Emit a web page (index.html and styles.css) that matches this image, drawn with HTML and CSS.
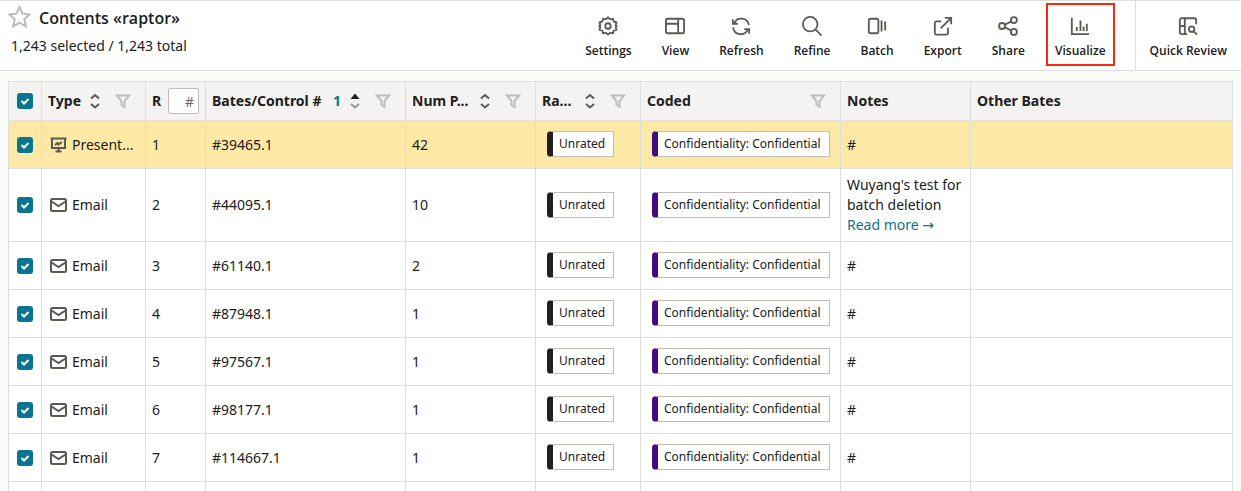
FILE: index.html
```
<!DOCTYPE html>
<html lang="en">

<head>
  <meta charset="UTF-8">
  <title>Contents «raptor»</title>
  <link rel="stylesheet" href="styles.css">
</head>

<body>
  <!-- shared icons -->
  <svg class="sprite" aria-hidden="true">
    <symbol id="sort" viewBox="0 0 12 18">
      <path d="M2 6.500l4-3.500 4 3.500M2 12l4 3.500 4-3.500" />
    </symbol>
    <symbol id="sort-up" viewBox="0 0 12 18">
      <path class="solid" d="M1.500 7l4.500-5.500 4.500 5.500z" />
      <path class="faded" d="M2 12l4 3.500 4-3.500" />
    </symbol>
    <symbol id="filter" viewBox="0 0 16 16">
      <path d="M2 2.500h12l-4.500 5.500v6l-3-2V8z" />
    </symbol>
    <symbol id="mail" viewBox="0 0 18 16">
      <rect x="1" y="2" width="15" height="12" rx="1.500" />
      <path d="M1.500 4.500l7 4.500 7-4.500" />
    </symbol>
    <symbol id="slides" viewBox="0 0 18 16">
      <path d="M.5 1.500h16M2 1.500v9.500h13V1.500M8.500 11v3.500M5.500 14.500h6M5 8l2.500-2 1 1.500L12 5" />
    </symbol>
  </svg>

  <header class="topbar">
    <div class="heading">
      <div class="title_row">
        <button class="star" type="button" aria-label="Favorite">
          <svg viewBox="0 0 22 22"><path d="M11 1.500l2.900 6.300 6.600.8-4.900 4.600 1.400 6.700-6-3.500-6 3.500 1.400-6.700-4.900-4.600 6.600-.8z" /></svg>
        </button>
        <h1>Contents «raptor»</h1>
      </div>
      <p>1,243 selected / 1,243 total</p>
    </div>

    <nav class="tools">
      <button type="button" class="tool">
        <svg viewBox="0 0 22 22"><path d="M11 1.500l2.300 2.200 3.200-.7.800 3 3 .9-.8 3.100 1 1-1 1.100.8 3.100-3 .9-.8 3-3.200-.7L11 20.500l-2.300-2.100-3.200.7-.8-3-3-.9.800-3.100-1-1.100 1-1-.8-3.100 3-.9.800-3 3.200.7z" /><circle cx="11" cy="11" r="3" /></svg>
        Settings
      </button>
      <button type="button" class="tool">
        <svg viewBox="0 0 22 22"><rect x="1" y="3" width="20" height="16" rx="2" /><path d="M1 8.500h13M14.500 3v16" /></svg>
        View
      </button>
      <button type="button" class="tool">
        <svg viewBox="0 0 22 22"><path d="M3.500 8a8.500 8.500 0 0 1 16.200 2M2.300 12.500a8.500 8.500 0 0 0 16.200 2.500M2 3.500v5h5.500M20 19.500v-5h-5.500" /></svg>
        Refresh
      </button>
      <button type="button" class="tool">
        <svg viewBox="0 0 22 22"><circle cx="9" cy="9" r="8" /><path d="M15 15l6.500 6.500" /></svg>
        Refine
      </button>
      <button type="button" class="tool">
        <svg viewBox="0 0 22 22"><rect x="2" y="3" width="10.500" height="16" rx="2" /><path d="M16 5v12M20 6v10" /></svg>
        Batch
      </button>
      <button type="button" class="tool">
        <svg viewBox="0 0 22 22"><path d="M9 6H4a2 2 0 0 0-2 2v10.500a2 2 0 0 0 2 2h10.500a2 2 0 0 0 2-2v-5.500M8.500 13.500L20 2M13 2h7v7" /></svg>
        Export
      </button>
      <button type="button" class="tool">
        <svg viewBox="0 0 22 22"><circle cx="4.500" cy="11" r="3.300" /><circle cx="17.500" cy="4.500" r="3.300" /><circle cx="17.500" cy="17.500" r="3.300" /><path d="M7.500 9.500l7-3.500M7.500 12.500l7 3.500" /></svg>
        Share
      </button>
      <button type="button" class="tool marked">
        <svg viewBox="0 0 22 22"><path d="M2 2v18h19M7.500 16.500v-4.500M11.500 16.500V5M15 16.500v-5M18.500 16.500v-8" /></svg>
        Visualize
      </button>
    </nav>

    <div class="review">
      <button type="button" class="tool">
        <svg viewBox="0 0 22 22"><path d="M10 20H4a2 2 0 0 1-2-2V4.500a2 2 0 0 1 2-2h14a2 2 0 0 1 2 2V9M7.500 2.500v17.500M2 11h5.500" /><circle cx="15" cy="14.500" r="3" /><path d="M17 16.500l4 4" /></svg>
        Quick Review
      </button>
    </div>
  </header>

  <main class="results">
    <table>
      <colgroup>
        <col class="col_check">
        <col class="col_type">
        <col class="col_row">
        <col class="col_bates">
        <col class="col_pages">
        <col class="col_rating">
        <col class="col_coded">
        <col class="col_notes">
        <col>
      </colgroup>
      <thead>
        <tr>
          <th class="check"><input type="checkbox" aria-label="Select all" checked></th>
          <th>
            <div class="head">
              <span class="name">Type</span>
              <button type="button" class="sort" aria-label="Sort by type"><svg><use href="#sort" /></svg></button>
              <button type="button" class="filter" aria-label="Filter type"><svg><use href="#filter" /></svg></button>
            </div>
          </th>
          <th>
            <div class="head row_head">
              <label for="row_number">R</label>
              <input type="text" id="row_number" placeholder="#">
            </div>
          </th>
          <th>
            <div class="head">
              <span class="name">Bates/Control #</span>
              <span class="order">1</span>
              <button type="button" class="sort" aria-label="Sort by Bates"><svg><use href="#sort-up" /></svg></button>
              <button type="button" class="filter" aria-label="Filter Bates"><svg><use href="#filter" /></svg></button>
            </div>
          </th>
          <th>
            <div class="head">
              <span class="name">Num P...</span>
              <button type="button" class="sort" aria-label="Sort by pages"><svg><use href="#sort" /></svg></button>
              <button type="button" class="filter" aria-label="Filter pages"><svg><use href="#filter" /></svg></button>
            </div>
          </th>
          <th>
            <div class="head">
              <span class="name">Ra...</span>
              <button type="button" class="sort" aria-label="Sort by rating"><svg><use href="#sort" /></svg></button>
              <button type="button" class="filter" aria-label="Filter rating"><svg><use href="#filter" /></svg></button>
            </div>
          </th>
          <th>
            <div class="head">
              <span class="name">Coded</span>
              <button type="button" class="filter" aria-label="Filter coded"><svg><use href="#filter" /></svg></button>
            </div>
          </th>
          <th>Notes</th>
          <th>Other Bates</th>
        </tr>
      </thead>
      <tbody>
        <tr class="current">
          <td class="check"><input type="checkbox" aria-label="Select row 1" checked></td>
          <td><div class="type"><svg><use href="#slides" /></svg>Present...</div></td>
          <td>1</td>
          <td>#39465.1</td>
          <td>42</td>
          <td class="tags"><span class="tag">Unrated</span></td>
          <td class="tags"><span class="tag code">Confidentiality: Confidential</span></td>
          <td>#</td>
          <td></td>
        </tr>
        <tr>
          <td class="check"><input type="checkbox" aria-label="Select row 2" checked></td>
          <td><div class="type"><svg><use href="#mail" /></svg>Email</div></td>
          <td>2</td>
          <td>#44095.1</td>
          <td>10</td>
          <td class="tags"><span class="tag">Unrated</span></td>
          <td class="tags"><span class="tag code">Confidentiality: Confidential</span></td>
          <td>Wuyang's test for batch deletion <a href="#">Read more <span class="arrow">→</span></a></td>
          <td></td>
        </tr>
        <tr>
          <td class="check"><input type="checkbox" aria-label="Select row 3" checked></td>
          <td><div class="type"><svg><use href="#mail" /></svg>Email</div></td>
          <td>3</td>
          <td>#61140.1</td>
          <td>2</td>
          <td class="tags"><span class="tag">Unrated</span></td>
          <td class="tags"><span class="tag code">Confidentiality: Confidential</span></td>
          <td>#</td>
          <td></td>
        </tr>
        <tr>
          <td class="check"><input type="checkbox" aria-label="Select row 4" checked></td>
          <td><div class="type"><svg><use href="#mail" /></svg>Email</div></td>
          <td>4</td>
          <td>#87948.1</td>
          <td>1</td>
          <td class="tags"><span class="tag">Unrated</span></td>
          <td class="tags"><span class="tag code">Confidentiality: Confidential</span></td>
          <td>#</td>
          <td></td>
        </tr>
        <tr>
          <td class="check"><input type="checkbox" aria-label="Select row 5" checked></td>
          <td><div class="type"><svg><use href="#mail" /></svg>Email</div></td>
          <td>5</td>
          <td>#97567.1</td>
          <td>1</td>
          <td class="tags"><span class="tag">Unrated</span></td>
          <td class="tags"><span class="tag code">Confidentiality: Confidential</span></td>
          <td>#</td>
          <td></td>
        </tr>
        <tr>
          <td class="check"><input type="checkbox" aria-label="Select row 6" checked></td>
          <td><div class="type"><svg><use href="#mail" /></svg>Email</div></td>
          <td>6</td>
          <td>#98177.1</td>
          <td>1</td>
          <td class="tags"><span class="tag">Unrated</span></td>
          <td class="tags"><span class="tag code">Confidentiality: Confidential</span></td>
          <td>#</td>
          <td></td>
        </tr>
        <tr>
          <td class="check"><input type="checkbox" aria-label="Select row 7" checked></td>
          <td><div class="type"><svg><use href="#mail" /></svg>Email</div></td>
          <td>7</td>
          <td>#114667.1</td>
          <td>1</td>
          <td class="tags"><span class="tag">Unrated</span></td>
          <td class="tags"><span class="tag code">Confidentiality: Confidential</span></td>
          <td>#</td>
          <td></td>
        </tr>
        <tr>
          <td></td>
          <td></td>
          <td></td>
          <td></td>
          <td></td>
          <td></td>
          <td></td>
          <td></td>
          <td></td>
        </tr>
      </tbody>
    </table>
  </main>
</body>

</html>
```
FILE: styles.css
```
* {
  box-sizing: border-box;
  margin: 0;
  padding: 0;
}

body {
  display: flex;
  flex-direction: column;
  height: 100vh;
  overflow: hidden;
  background-color: #fafaf8;
  color: #21201c;
  font-family: "Noto Sans", "Open Sans", sans-serif;
  font-size: 14px;
  line-height: 20px;
}

button {
  border: 0;
  background: none;
  color: inherit;
  font: inherit;
  cursor: pointer;
}

svg {
  display: block;
  fill: none;
  stroke: #5b5a52;
  stroke-width: 2;
}

.sprite {
  position: absolute;
  width: 0;
  height: 0;
}

/* top bar */
.topbar {
  display: flex;
  flex-shrink: 0;
  border-top: 1px solid #dfdfdc;
  border-bottom: 1px solid #dfdfdc;
  background-color: #fff;
  font-family: "Open Sans", "Noto Sans", sans-serif;
}

.heading {
  flex: 1;
  padding: 4px 8px;
}

.heading p {
  padding: 7px 3px 0;
  font-family: "Noto Sans", sans-serif;
}

.title_row {
  display: flex;
  align-items: center;
  gap: 8px;
}

.title_row h1 {
  padding-top: 2px;
  font-size: 16px;
  font-weight: 600;
}

.star svg {
  width: 23px;
  height: 24px;
  stroke: #bebdb8;
}

.tools {
  display: flex;
  gap: 12px;
  padding: 2px 20px 4px 0;
}

.tool {
  display: flex;
  flex-direction: column;
  align-items: center;
  gap: 6px;
  padding: 11px 7px 5px;
  border: 2px solid transparent;
  font-size: 12px;
  font-weight: 600;
  line-height: 17px;
  white-space: nowrap;
}

.tool svg {
  width: 20px;
  height: 20px;
}

.tool.marked {
  border-color: #f22c10;
}

.review {
  padding: 2px 5px 4px;
  border-left: 1px solid #dfdfdc;
}

/* result table */
.results {
  flex: 1;
  min-height: 0;
  padding: 10px 8px 0;
  overflow: hidden;
}

table {
  width: 100%;
  border-top: 1px solid #dfdfdf;
  border-left: 1px solid #dfdfdf;
  border-spacing: 0;
  table-layout: fixed;
}

.col_check {
  width: 33px;
}

.col_type {
  width: 104px;
}

.col_row {
  width: 60px;
}

.col_bates,
.col_coded {
  width: 200px;
}

.col_pages,
.col_notes {
  width: 130px;
}

.col_rating {
  width: 105px;
}

th,
td {
  height: 48px;
  padding: 6px;
  border-right: 1px solid #dfdfdf;
  border-bottom: 1px solid #dfdfdf;
  background-color: #fff;
  text-align: left;
  vertical-align: middle;
}

th {
  height: 39px;
  background-color: #f4f3f2;
  font-weight: 700;
}

.current td {
  background-color: #fee8a6;
}

a {
  color: #08758c;
  text-decoration: none;
  white-space: nowrap;
}

.arrow {
  font-family: "DejaVu Sans", sans-serif;
}

.check {
  padding: 0 8px;
}

input[type="checkbox"] {
  display: block;
  width: 16px;
  height: 16px;
  border-radius: 3px;
  appearance: none;
  background: #08758c url("data:image/svg+xml,%3Csvg xmlns='http://www.w3.org/2000/svg' viewBox='0 0 16 16'%3E%3Cpath d='M4.500 8l2.500 2.500 4.500-4.500' fill='none' stroke='white' stroke-width='2'/%3E%3C/svg%3E");
}

.head {
  display: flex;
  align-items: center;
  padding-right: 8px;
}

.name {
  margin-right: auto;
  white-space: nowrap;
}

.order {
  padding-right: 8px;
  color: #08758c;
}

.sort svg {
  width: 12px;
  height: 18px;
}

.filter {
  margin-left: 14px;
}

.filter svg {
  width: 16px;
  height: 16px;
  stroke: #bebdb8;
}

.solid {
  fill: #21201c;
  stroke: none;
}

.faded {
  stroke: #96958f;
}

.row_head {
  justify-content: space-between;
  padding-right: 0;
}

.row_head input {
  width: 31px;
  height: 26px;
  padding: 0 4px;
  border: 1px solid #bebdb8;
  border-radius: 2px;
  background-color: #fff;
  font: inherit;
  font-weight: 400;
  text-align: right;
}

.row_head input::placeholder {
  color: #6b6a64;
}

.type {
  display: flex;
  align-items: center;
  gap: 4px;
  padding-left: 2px;
  white-space: nowrap;
}

.type svg {
  width: 18px;
  height: 16px;
}

.tags {
  padding: 0 11px 1px;
}

.tag {
  display: inline-block;
  padding: 3px 8px 3px 6px;
  border: 1px solid #bebdb8;
  border-left: 6px solid #21201c;
  border-radius: 4px 0 0 4px;
  background-color: #fff;
  font-size: 12px;
  line-height: 18px;
  white-space: nowrap;
  vertical-align: middle;
}

.tag.code {
  border-left-color: #440b80;
}
```
